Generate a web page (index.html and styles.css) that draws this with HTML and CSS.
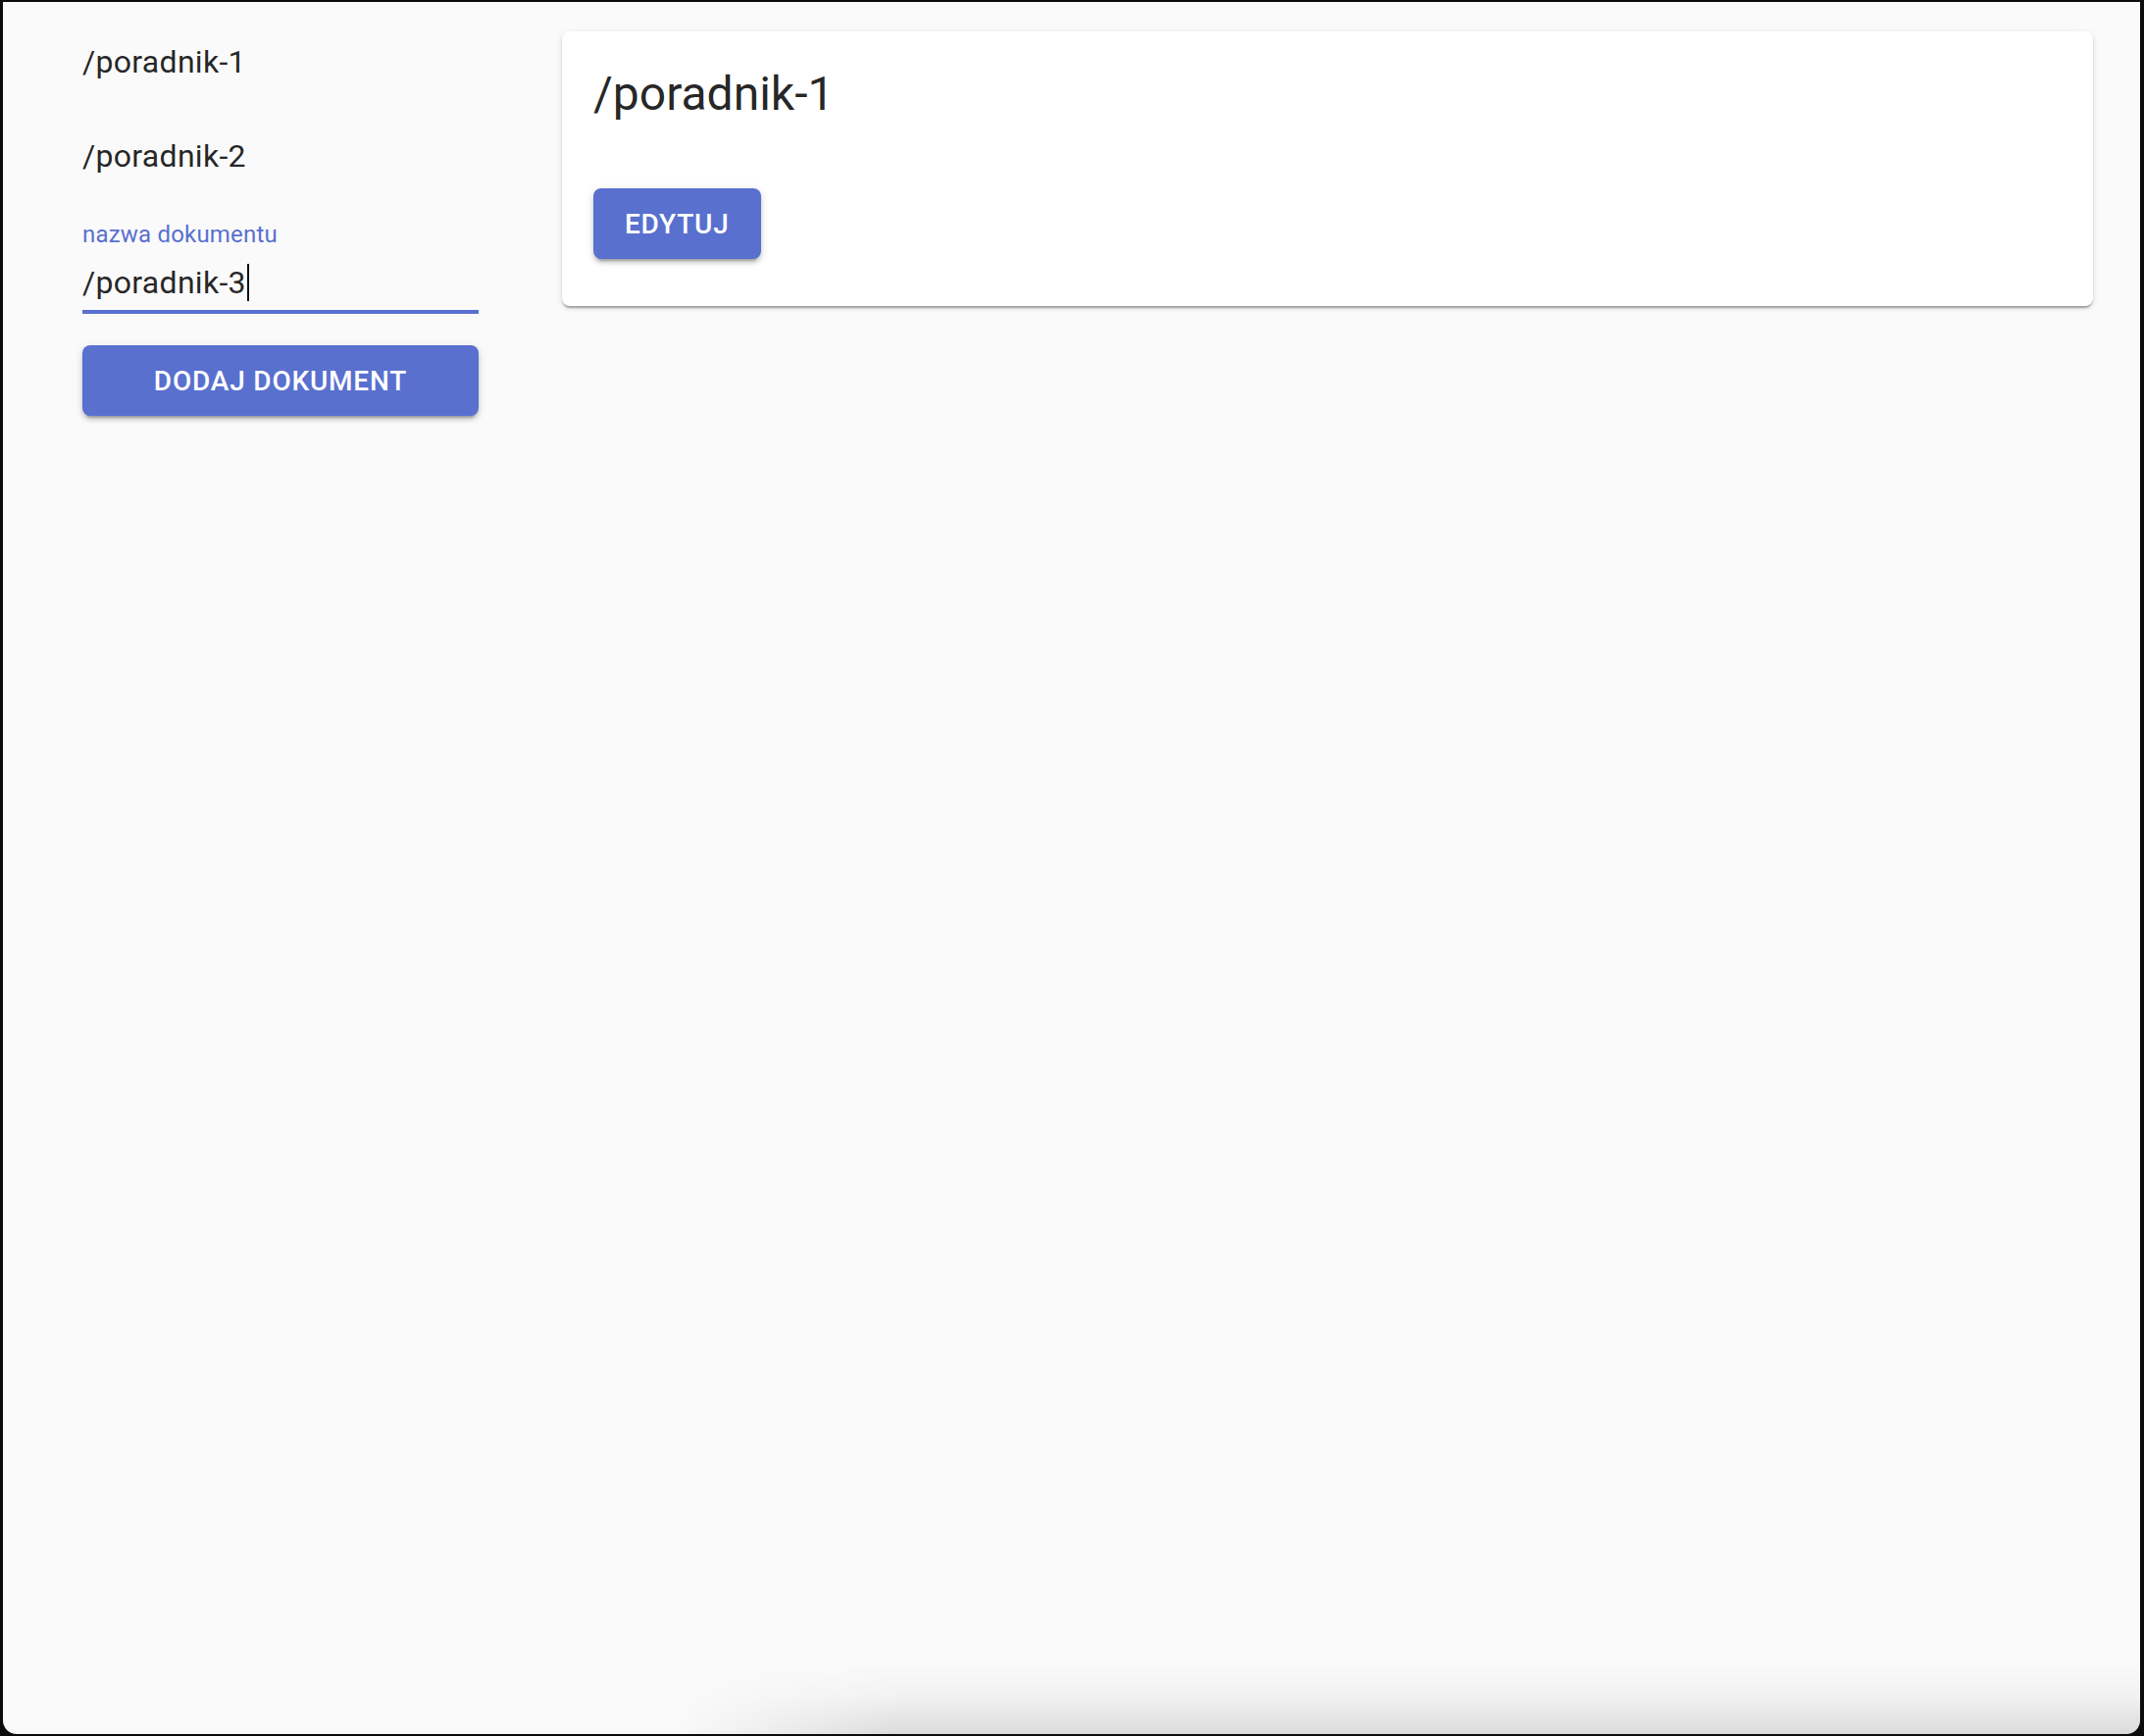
FILE: index.html
```html
<!DOCTYPE html>
<html lang="pl">
<head>
<meta charset="utf-8">
<title>Dokumenty</title>
<link rel="stylesheet" href="styles.css">
</head>
<body>
<div class="window">
  <aside class="sidebar">
    <ul class="doc-list">
      <li class="doc-item">/poradnik-1</li>
      <li class="doc-item">/poradnik-2</li>
    </ul>
    <div class="field">
      <label class="field-label">nazwa dokumentu</label>
      <div class="field-input"><span class="field-value">/poradnik-3</span><span class="caret"></span></div>
    </div>
    <button class="btn btn-block">Dodaj dokument</button>
  </aside>
  <main class="content">
    <section class="card">
      <h2 class="card-title">/poradnik-1</h2>
      <div class="card-actions">
        <button class="btn">Edytuj</button>
      </div>
    </section>
  </main>
  <div class="bottom-shade"></div>
</div>
</body>
</html>
```

FILE: styles.css
```css
html, body {
  margin: 0;
  padding: 0;
}
body {
  width: 2186px;
  height: 1770px;
  background: #0c0c0c;
  overflow: hidden;
  font-family: Roboto, "Noto Sans", sans-serif;
  color: rgba(0, 0, 0, 0.87);
}
.window {
  position: relative;
  box-sizing: border-box;
  margin: 2px 4px 0 3px;
  height: 1766px;
  background: #fafafa;
  border-radius: 0 0 14px 14px;
  overflow: hidden;
  display: flex;
  align-items: flex-start;
  padding: 0 48px 0 81px;
  gap: 85px;
}
.sidebar {
  width: 404px;
  flex: none;
  display: flex;
  flex-direction: column;
}
.doc-list {
  list-style: none;
  margin: 0;
  padding: 13px 0 17px;
}
.doc-item {
  height: 96px;
  display: flex;
  align-items: center;
  font-size: 32px;
  line-height: 48px;
  letter-spacing: 0.3px;
}
.field {
  height: 96px;
  display: flex;
  flex-direction: column;
}
.field-label {
  color: #5970cf;
  font-size: 24px;
  line-height: 24px;
  height: 32px;
  padding-top: 3px;
  box-sizing: border-box;
  letter-spacing: 0.2px;
}
.field-input {
  flex: 1;
  box-sizing: border-box;
  border-bottom: 4px solid #5970cf;
  padding-top: 13px;
  font-size: 32px;
  line-height: 38px;
  display: flex;
  align-items: flex-start;
  letter-spacing: 0.3px;
}
.caret {
  display: inline-block;
  width: 2px;
  height: 38px;
  background: #111;
  margin-left: 1px;
}
.btn {
  font-family: Roboto, "Noto Sans", sans-serif;
  font-weight: 500;
  font-size: 28px;
  letter-spacing: 0.8px;
  text-transform: uppercase;
  color: #fff;
  background: #5970cf;
  border: none;
  border-radius: 8px;
  height: 72px;
  padding: 0 32px;
  box-shadow: 0 6px 2px -4px rgba(0, 0, 0, 0.2), 0 4px 4px 0 rgba(0, 0, 0, 0.14), 0 2px 10px 0 rgba(0, 0, 0, 0.12);
  cursor: pointer;
}
.btn-block {
  width: 100%;
  margin-top: 32px;
}
.content {
  flex: 1;
  padding-top: 30px;
}
.card {
  background: #fff;
  border-radius: 8px;
  box-shadow: 0 4px 2px -2px rgba(0, 0, 0, 0.2), 0 2px 2px 0 rgba(0, 0, 0, 0.14), 0 2px 6px 0 rgba(0, 0, 0, 0.12);
  padding: 32px 32px 48px;
  height: 280px;
  box-sizing: border-box;
}
.card-title {
  margin: 0;
  font-size: 48px;
  font-weight: 400;
  line-height: 64px;
  letter-spacing: 0;
}
.card-actions {
  margin-top: 64px;
  display: flex;
}
.bottom-shade {
  position: absolute;
  left: 680px;
  right: 0;
  bottom: 0;
  height: 72px;
  background: linear-gradient(to bottom, rgba(0, 0, 0, 0), rgba(0, 0, 0, 0.03) 45%, rgba(0, 0, 0, 0.12));
  -webkit-mask-image: linear-gradient(to right, transparent, #000 240px);
  mask-image: linear-gradient(to right, transparent, #000 240px);
  pointer-events: none;
}
```
